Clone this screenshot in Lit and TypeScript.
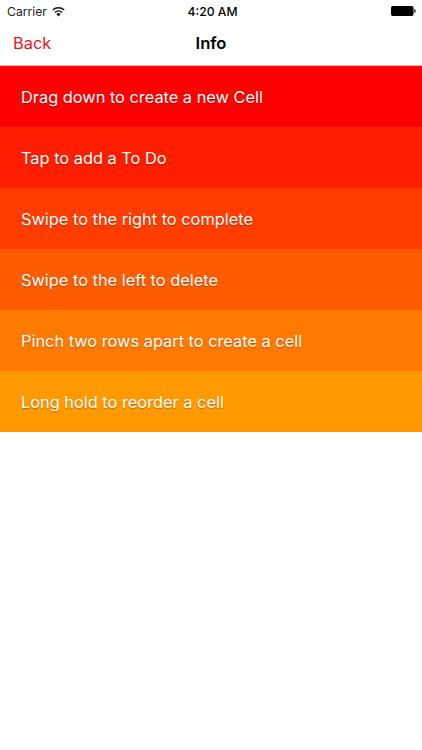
import { LitElement, html, css } from "lit";
import { customElement } from "lit/decorators.js";

const rows: [string, string][] = [
  ["Drag down to create a new Cell", "#ff0000"],
  ["Tap to add a To Do", "#ff1e00"],
  ["Swipe to the right to complete", "#ff3d00"],
  ["Swipe to the left to delete", "#ff5c00"],
  ["Pinch two rows apart to create a cell", "#ff7a00"],
  ["Long hold to reorder a cell", "#ff9900"],
];

@customElement("app-root")
export class AppRoot extends LitElement {
  static styles = css`
    :host {
      display: block;
      width: 422px;
      height: 750px;
      background: #fff;
      font-family: Inter, "Liberation Sans", sans-serif;
      overflow: hidden;
    }
    .status {
      height: 22px;
      display: grid;
      grid-template-columns: 1fr auto 1fr;
      align-items: center;
      font-size: 12.2px;
      color: #000;
    }
    .left {
      display: flex;
      align-items: center;
      gap: 5px;
      padding-left: 7px;
      color: #222;
    }
    .time {
      font-weight: 500;
      padding-left: 3px;
    }
    .right {
      display: flex;
      justify-content: flex-end;
      padding-right: 6px;
    }
    .nav {
      height: 44px;
      display: grid;
      grid-template-columns: 1fr auto 1fr;
      align-items: center;
      border-bottom: 1px solid #e6b8b8;
      box-sizing: border-box;
      padding-bottom: 2px;
    }
    .back {
      padding-left: 13px;
      font-size: 16.4px;
      color: #e8141c;
    }
    .title {
      font-size: 16.6px;
      font-weight: 600;
      color: #000;
    }
    .row {
      height: 61px;
      display: flex;
      align-items: center;
      padding-left: 21px;
      font-size: 16.35px;
      color: #fff;
      text-shadow: 0 1px 1px rgba(0, 0, 0, 0.3);
    }
  `;

  render() {
    return html`
      <div class="status">
        <div class="left">
          <span>Carrier</span>
          <svg width="13" height="11" viewBox="0 0 13 11">
            <path d="M6.5 10.4 4.3 8a3.2 3.2 0 0 1 4.4 0Z" fill="#111" />
            <path d="M2.9 6.4a5.2 5.2 0 0 1 7.2 0" fill="none" stroke="#111" stroke-width="1.4" />
            <path d="M.8 4a8.3 8.3 0 0 1 11.4 0" fill="none" stroke="#111" stroke-width="1.4" />
          </svg>
        </div>
        <div class="time">4:20 AM</div>
        <div class="right">
          <svg width="25" height="10" viewBox="0 0 25 10">
            <rect x="0" y="0" width="22.5" height="10" rx="1.8" fill="#000" />
            <rect x="23" y="3.3" width="1.6" height="3.4" rx="0.7" fill="#333" />
          </svg>
        </div>
      </div>
      <div class="nav">
        <div class="back">Back</div>
        <div class="title">Info</div>
        <div></div>
      </div>
      ${rows.map(([t, c]) => html`<div class="row" style="background:${c}">${t}</div>`)}
    `;
  }
}
